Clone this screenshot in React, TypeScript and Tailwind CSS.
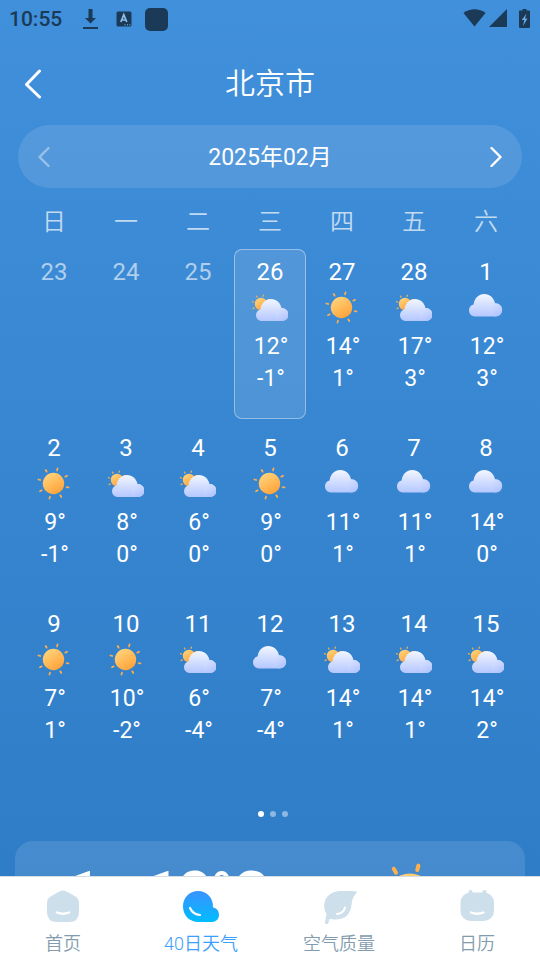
import type { ReactNode } from "react";

type Weather = "sun" | "partly" | "cloud";

interface Day {
  date: number;
  weather?: Weather;
  high?: number;
  low?: number;
  selected?: boolean;
}

const WEEKDAYS = ["日", "一", "二", "三", "四", "五", "六"];

const DAYS: Day[] = [
  { date: 23 },
  { date: 24 },
  { date: 25 },
  { date: 26, weather: "partly", high: 12, low: -1, selected: true },
  { date: 27, weather: "sun", high: 14, low: 1 },
  { date: 28, weather: "partly", high: 17, low: 3 },
  { date: 1, weather: "cloud", high: 12, low: 3 },
  { date: 2, weather: "sun", high: 9, low: -1 },
  { date: 3, weather: "partly", high: 8, low: 0 },
  { date: 4, weather: "partly", high: 6, low: 0 },
  { date: 5, weather: "sun", high: 9, low: 0 },
  { date: 6, weather: "cloud", high: 11, low: 1 },
  { date: 7, weather: "cloud", high: 11, low: 1 },
  { date: 8, weather: "cloud", high: 14, low: 0 },
  { date: 9, weather: "sun", high: 7, low: 1 },
  { date: 10, weather: "sun", high: 10, low: -2 },
  { date: 11, weather: "partly", high: 6, low: -4 },
  { date: 12, weather: "cloud", high: 7, low: -4 },
  { date: 13, weather: "partly", high: 14, low: 1 },
  { date: 14, weather: "partly", high: 14, low: 1 },
  { date: 15, weather: "partly", high: 14, low: 2 },
];

export default function App() {
  return (
    <div className="flex h-screen flex-col overflow-hidden bg-linear-to-b from-[#4190db] to-[#2d7bc5] font-['Roboto','Noto_Sans_CJK_SC',sans-serif] text-white">
      <Gradients />
      <StatusBar />
      <header className="grid h-[87px] shrink-0 grid-cols-[66px_1fr_66px] items-center pt-[5px]">
        <button type="button" aria-label="返回" className="flex h-12 items-center justify-center">
          <svg viewBox="0 0 18 30" className="h-[30px] w-[18px]" fill="none" stroke="currentColor" strokeWidth="3" strokeLinecap="round" strokeLinejoin="round">
            <path d="M15.500 2 2.500 15.500 15.500 28" />
          </svg>
        </button>
        <h1 className="text-center text-[30px] leading-10 font-[350]">北京市</h1>
      </header>
      <main className="flex min-h-0 flex-1 flex-col overflow-y-auto [scrollbar-width:none]">
        <MonthSwitcher />
        <Calendar />
        <PageDots />
        <TodayCard />
      </main>
      <TabBar />
    </div>
  );
}

/** Paint shared by every weather icon on the page. */
function Gradients() {
  return (
    <svg className="absolute size-0" aria-hidden="true">
      <defs>
        <linearGradient id="sun" x1="0" y1="0" x2="0.6" y2="1">
          <stop offset="0" stopColor="#ffda83" />
          <stop offset="1" stopColor="#ffa43c" />
        </linearGradient>
        <linearGradient id="cloud" x1="0" y1="0" x2="0" y2="1">
          <stop offset="0" stopColor="#f2f6ff" />
          <stop offset="1" stopColor="#b4c7ff" />
        </linearGradient>
        <linearGradient id="puff" x1="0" y1="0" x2="0.6" y2="1">
          <stop offset="0" stopColor="#dce5ff" />
          <stop offset="1" stopColor="#b0c3ff" />
        </linearGradient>
        <linearGradient id="tab" x1="0" y1="0" x2="0" y2="1">
          <stop offset="0.1" stopColor="#3497ff" />
          <stop offset="1" stopColor="#00bcff" />
        </linearGradient>
      </defs>
    </svg>
  );
}

function StatusBar() {
  return (
    <div className="flex h-[38px] shrink-0 items-center px-[9px] text-[#1a3a58]">
      <time className="w-[73px] pt-[2px] text-[21px] font-medium">10:55</time>
      <svg viewBox="0 0 18 22" className="h-[22px] w-[18px]" fill="currentColor">
        <path d="M6.500 1h4v9H14l-5.500 5.500L3 10h3.500zM1 19h15v2H1z" />
      </svg>
      <svg viewBox="0 0 16 16" className="ml-4 size-4" aria-hidden="true">
        <rect x="0.500" y="0.500" width="15" height="15" rx="1.500" fill="currentColor" />
        <path d="M4.800 11 7.800 3.800 10.800 11M5.800 9h4" fill="none" stroke="#8fbfe9" strokeWidth="1.700" />
        <path d="M8.500 13.800h1M11 13.800h1M13.300 13.800h1" stroke="#8fbfe9" strokeWidth="1" />
      </svg>
      <span className="ml-[13px] size-[23px] rounded-[5px] bg-[#1a3a58]" />
      <svg viewBox="0 0 24 20" className="ml-auto h-5 w-6" fill="currentColor">
        <path d="M0.500 4C7 -1 16 -1 22.500 4L11.500 17.500z" />
      </svg>
      <svg viewBox="0 0 20 20" className="ml-[2px] size-5" fill="currentColor">
        <path d="M18 0V18H0z" />
      </svg>
      <svg viewBox="0 0 12 20" className="ml-[10px] h-5 w-3">
        <path d="M3.500 0h4v1.500H10a1 1 0 0 1 1 1v15.500a1 1 0 0 1-1 1H1a1 1 0 0 1-1-1V2.500a1 1 0 0 1 1-1h2.500z" fill="currentColor" />
        <path d="M7.500 4.500 2.800 11h2.500L4 17 8.500 9.500H6z" fill="#6cabe2" />
      </svg>
    </div>
  );
}

function MonthSwitcher() {
  return (
    <div className="mx-[18px] flex h-[63px] shrink-0 items-center justify-between rounded-full bg-white/11 px-3">
      <button type="button" aria-label="上个月" disabled className="flex size-7 items-center justify-center opacity-40">
        <svg viewBox="0 0 12 20" className="h-5 w-3" fill="none" stroke="currentColor" strokeWidth="2.400" strokeLinecap="round" strokeLinejoin="round">
          <path d="M10.500 1 1.500 10l9 9" />
        </svg>
      </button>
      <h2 className="pt-[2px] text-[23px] leading-8">2025年02月</h2>
      <button type="button" aria-label="下个月" className="flex size-7 items-center justify-center">
        <svg viewBox="0 0 12 20" className="h-5 w-3" fill="none" stroke="currentColor" strokeWidth="2.400" strokeLinecap="round" strokeLinejoin="round">
          <path d="m1.500 1 9 9-9 9" />
        </svg>
      </button>
    </div>
  );
}

function Calendar() {
  return (
    <table className="mx-[18px] mt-3 block shrink-0">
      <thead className="block">
        <tr className="grid grid-cols-7">
          {WEEKDAYS.map((day) => (
            <th key={day} scope="col" className="text-2xl leading-[44px] font-[350] text-white/70">
              {day}
            </th>
          ))}
        </tr>
      </thead>
      <tbody className="mt-[5px] grid gap-[6px]">
        {[0, 7, 14].map((start) => (
          <tr key={start} className="grid grid-cols-7">
            {DAYS.slice(start, start + 7).map((day) => (
              <DayCell key={day.date} {...day} />
            ))}
          </tr>
        ))}
      </tbody>
    </table>
  );
}

function DayCell({ date, weather, high, low, selected }: Day) {
  return (
    <td
      className={`flex h-[170px] flex-col items-center rounded-lg border pt-[6px] text-2xl leading-8 ${
        selected ? "border-white/40 bg-white/11" : "border-transparent"
      }`}
    >
      <span className={weather ? "" : "text-white/60"}>{date}</span>
      {weather && (
        <>
          <WeatherIcon type={weather} />
          <span className="pl-[2px] text-[23px]">{high}°</span>
          <span className="pl-[2px] text-[23px]">{low}°</span>
        </>
      )}
    </td>
  );
}

function WeatherIcon({ type }: { type: Weather }) {
  return (
    <svg viewBox="0 0 36 36" className="mt-[2px] mb-[5px] size-9 shrink-0" role="img" aria-label={type}>
      {type === "sun" && (
        <>
          <circle cx="17.500" cy="17.500" r="10.700" fill="url(#sun)" />
          <Rays cx={17.5} cy={17.5} from={13.6} to={15.6} width={1.7} />
        </>
      )}
      {type === "partly" && (
        <>
          <circle cx="9" cy="14" r="6.200" fill="url(#sun)" />
          <Rays cx={9} cy={14} from={7.8} to={9.2} width={1.2} />
          <CloudShape x={4} y={9} scale={1} />
        </>
      )}
      {type === "cloud" && <CloudShape x={1} y={4} scale={1.02} />}
    </svg>
  );
}

function Rays({ cx, cy, from, to, width }: { cx: number; cy: number; from: number; to: number; width: number }) {
  return (
    <g stroke="#ffb04c" strokeWidth={width} strokeLinecap="round">
      {[15, 60, 105, 150, 195, 240, 285, 330].map((angle) => (
        <line key={angle} x1={cx} y1={cy - from} x2={cx} y2={cy - to} transform={`rotate(${angle} ${cx} ${cy})`} />
      ))}
    </g>
  );
}

function CloudShape({ x, y, scale }: { x: number; y: number; scale: number }) {
  return (
    <g transform={`translate(${x} ${y}) scale(${scale})`}>
      <path d="M6 22C2.500 22 0 19.500 0 16c0-2.800 1.800-5 4.500-5.600C5 4.500 9.500 0 15 0c5.200 0 9.500 3.800 10.500 9C29.500 9 32.500 12 32.500 15.700S29.500 22 26 22z" fill="url(#cloud)" />
      <circle cx="26" cy="15.500" r="6.500" fill="url(#puff)" opacity="0.8" />
    </g>
  );
}

function PageDots() {
  return (
    <div className="mt-10 flex shrink-0 justify-center gap-[6px] pl-[6px]">
      <span className="size-[6px] rounded-full bg-white" />
      <span className="size-[6px] rounded-full bg-white/45" />
      <span className="size-[6px] rounded-full bg-white/45" />
    </div>
  );
}

function TodayCard() {
  return (
    <section className="mx-[15px] mt-6 flex h-40 shrink-0 items-start justify-between rounded-[18px] bg-white/11 px-[31px] pt-4">
      <p className="text-[56px] leading-[70px] font-bold">
        -1<span className="mx-[5px]">~</span>12°C
      </p>
      <svg viewBox="0 0 80 80" className="mr-11 size-20" aria-hidden="true">
        <circle cx="40" cy="40" r="23.500" fill="url(#sun)" />
        <Rays cx={40} cy={40} from={28} to={32.5} width={4} />
      </svg>
    </section>
  );
}

function TabBar() {
  return (
    <nav className="h-[84px] shrink-0 border-t border-[#d5dde5] bg-white">
      <div className="-mx-[6px] grid grid-cols-4 text-lg font-[350] text-[#829cae]">
        <Tab label="首页">
          <path d="M20 2.500q-2.500 0-5 1.700L7.500 8.500Q4 10.500 4 15v9q0 10 10 10h12q10 0 10-10v-9q0-4.500-3.500-6.500L25 4.200q-2.500-1.700-5-1.700z" fill="#cddfeb" />
          <path d="M14 24.500q6 2.500 12 0" fill="none" stroke="#fff" strokeWidth="2.400" strokeLinecap="round" />
        </Tab>
        <Tab label="40日天气" active>
          <path d="M17 3C8.500 3 2 9.500 2 18.500 2 27.500 8.500 34 17.500 34H31c4 0 7-3 7-7 0-4.200-2.500-7.200-6-7.500C32.500 10 26 3 17 3z" fill="url(#tab)" />
          <path d="M9 20q3 6.500 10 7" fill="none" stroke="#fff" strokeWidth="2.200" strokeLinecap="round" />
        </Tab>
        <Tab label="空气质量">
          <path d="M36.500 3.200C38 3.200 38 4.500 37.300 5.300 31 12 34 17 30.500 24 28 29.500 22 32.500 10.500 31L9.500 34.500c-.8 2.500-4 1.700-3.500-.8L7.500 26C3 19 5 9 13 5 18 2.500 26 3.200 36.500 3.200z" fill="#cddfeb" />
          <path d="M18 26q6.500-.5 8-6.500" fill="none" stroke="#fff" strokeWidth="2" strokeLinecap="round" />
        </Tab>
        <Tab label="日历">
          <path d="M13.500 4v5M27.500 4v5" stroke="#cddfeb" strokeWidth="4" strokeLinecap="round" />
          <rect x="3.500" y="4.500" width="33.500" height="28.500" rx="10" fill="#cddfeb" />
          <path d="M14 24.500q6 2.500 12.500 0" fill="none" stroke="#fff" strokeWidth="2.400" strokeLinecap="round" />
        </Tab>
      </div>
    </nav>
  );
}

function Tab({ label, active, children }: { label: string; active?: boolean; children: ReactNode }) {
  return (
    <a href="#" aria-current={active ? "page" : undefined} className={`flex flex-col items-center pt-[11px] ${active ? "text-[#3c9ffc]" : ""}`}>
      <svg viewBox="0 0 40 40" className="size-10" aria-hidden="true">
        {children}
      </svg>
      <span className="leading-8">{label}</span>
    </a>
  );
}
